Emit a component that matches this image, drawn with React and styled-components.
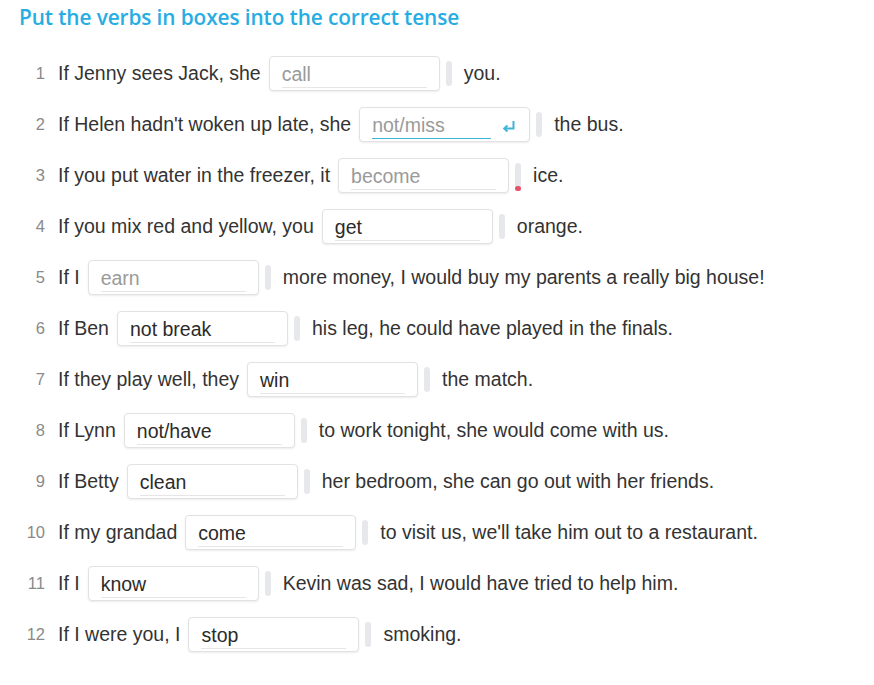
import React from 'react';
import styled, { createGlobalStyle } from 'styled-components';

const GlobalStyle = createGlobalStyle`
  body {
    margin: 0;
    background: #ffffff;
    font-family: "Liberation Sans", Arial, sans-serif;
  }
`;

const Page = styled.div`
  padding: 3px 0 0 19px;
  width: 874px;
  height: 685px;
  box-sizing: border-box;
  overflow: hidden;
`;

const Title = styled.h1`
  margin: 0;
  height: 45px;
  font-family: "Open Sans", sans-serif;
  font-weight: 600;
  font-size: 20.8px;
  line-height: 28px;
  color: #27ade3;
  letter-spacing: -0.1px;
`;

const List = styled.ol`
  list-style: none;
  margin: 0;
  padding: 0;
`;

const Row = styled.li`
  display: flex;
  align-items: center;
  height: 51px;
  font-size: 19.5px;
  color: #333333;
  white-space: nowrap;
`;

const Num = styled.span`
  width: 26px;
  margin-right: 13px;
  text-align: right;
  font-size: 16.5px;
  color: #8a8a8a;
`;

const Text = styled.span``;

const Box = styled.span`
  position: relative;
  display: flex;
  align-items: center;
  box-sizing: border-box;
  width: 171px;
  height: 35px;
  margin-left: 8px;
  padding: 0 12px;
  border: 1px solid #e2e2e2;
  border-radius: 4px;
  background: #fff;
  box-shadow: 0 1px 2px rgba(0, 0, 0, 0.08);
`;

const Value = styled.span`
  flex: 1;
  height: 26px;
  line-height: 27px;
  color: ${p => (p.$hint ? '#9a9a9a' : '#2b2b2b')};
  border-bottom: 1px solid ${p => (p.$focus ? '#3fb4d9' : '#e6e6e6')};
  margin-top: 2px;
  margin-right: ${p => (p.$focus ? '26px' : '0')};
`;

const Enter = styled.svg`
  position: absolute;
  right: 14px;
  top: 13px;
`;

const Bar = styled.span`
  position: relative;
  width: 6px;
  height: 25px;
  margin: 0 12px 0 6px;
  border-radius: 3px;
  background: #e6e8eb;
  &::after {
    content: '';
    display: ${p => (p.$error ? 'block' : 'none')};
    position: absolute;
    left: 0;
    bottom: -3px;
    width: 6px;
    height: 5px;
    border-radius: 3px;
    background: #e8506a;
  }
`;

const rows = [
  { before: 'If Jenny sees Jack, she', value: 'call', hint: true, after: 'you.' },
  { before: "If Helen hadn't woken up late, she", value: 'not/miss', hint: true, focus: true, after: 'the bus.' },
  { before: 'If you put water in the freezer, it', value: 'become', hint: true, error: true, after: 'ice.' },
  { before: 'If you mix red and yellow, you', value: 'get', after: 'orange.' },
  { before: 'If I', value: 'earn', hint: true, after: 'more money, I would buy my parents a really big house!' },
  { before: 'If Ben', value: 'not break', after: 'his leg, he could have played in the finals.' },
  { before: 'If they play well, they', value: 'win', after: 'the match.' },
  { before: 'If Lynn', value: 'not/have', after: 'to work tonight, she would come with us.' },
  { before: 'If Betty', value: 'clean', after: 'her bedroom, she can go out with her friends.' },
  { before: 'If my grandad', value: 'come', after: "to visit us, we'll take him out to a restaurant." },
  { before: 'If I', value: 'know', after: 'Kevin was sad, I would have tried to help him.' },
  { before: 'If I were you, I', value: 'stop', after: 'smoking.' },
];

export default function App() {
  return (
    <>
      <GlobalStyle />
      <Page>
        <Title>Put the verbs in boxes into the correct tense</Title>
        <List>
          {rows.map((r, i) => (
            <Row key={i}>
              <Num>{i + 1}</Num>
              <Text>{r.before}</Text>
              <Box>
                <Value $hint={r.hint} $focus={r.focus}>{r.value}</Value>
                {r.focus && (
                  <Enter width="13" height="11" viewBox="0 0 13 11">
                    <path d="M11.5 0v7.5H3" fill="none" stroke="#3fb4d9" strokeWidth="2" />
                    <path d="M5.5 4.5L2.2 7.5 5.5 10.5" fill="none" stroke="#3fb4d9" strokeWidth="2" />
                  </Enter>
                )}
              </Box>
              <Bar $error={r.error} />
              <Text>{r.after}</Text>
            </Row>
          ))}
        </List>
      </Page>
    </>
  );
}
